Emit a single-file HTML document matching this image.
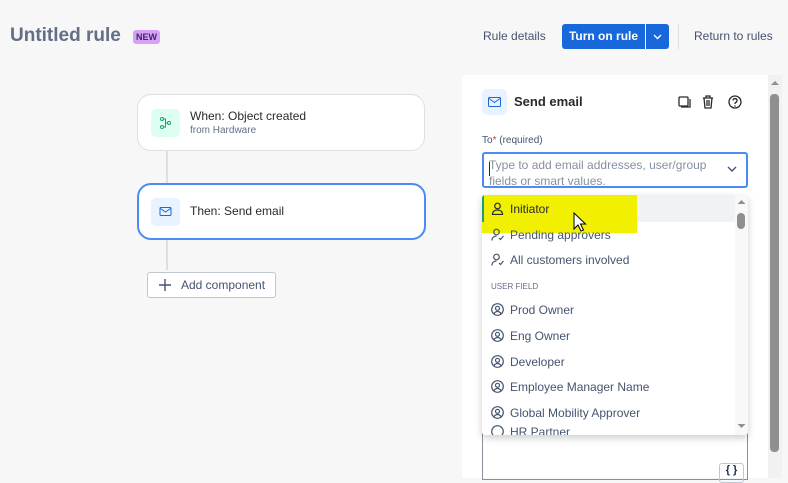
<!DOCTYPE html>
<html><head><style>
*{box-sizing:border-box;margin:0;padding:0}
body{width:788px;height:478px;overflow:hidden;background:#f7f7f7;font-family:"Liberation Sans",sans-serif;color:#172b4d;position:relative}
.a{position:absolute}
.row{position:absolute;left:482px;width:253px;height:25px;font-size:12px;color:#44546f;display:flex;align-items:center;padding-left:9px}
.row svg{margin-right:6px}
</style></head><body>
<div class="a" style="left:10px;top:25px;font-size:19px;font-weight:bold;color:#626f86">Untitled rule</div>
<div class="a" style="left:133px;top:30px;background:#d8a0f7;color:#352c63;font-size:9px;font-weight:bold;padding:2px 3px;border-radius:3px">NEW</div>
<div class="a" style="left:483px;top:29px;font-size:12px;color:#44546f">Rule details</div>
<div class="a" style="left:562px;top:24px;width:83px;height:25px;background:#1868db;border-radius:3px 0 0 3px;color:#fff;font-size:12px;font-weight:bold;line-height:25px;text-align:center">Turn on rule</div>
<div class="a" style="left:646px;top:24px;width:23px;height:25px;background:#1868db;border-radius:0 3px 3px 0"><svg width="23" height="25"><path d="M8 11l3.5 3.5L15 11" stroke="#fff" stroke-width="1.4" fill="none"/></svg></div>
<div class="a" style="left:678px;top:24px;width:1px;height:25px;background:#dcdfe4"></div>
<div class="a" style="left:694px;top:29px;font-size:12px;color:#44546f">Return to rules</div>

<div class="a" style="left:166px;top:150px;width:2px;height:120px;background:#dcdfe4"></div>
<div class="a" style="left:137px;top:94px;width:288px;height:57px;background:#fff;border:1px solid #dcdfe4;border-radius:14px"></div>
<div class="a" style="left:151px;top:109px;width:29px;height:28px;background:#dcfff1;border-radius:5px"><svg width="29" height="28"><g stroke="#22a06b" stroke-width="1" fill="none"><circle cx="11" cy="10" r="1.5"/><circle cx="11" cy="18" r="1.5"/><circle cx="18" cy="14" r="1.5"/><path d="M12.5 10h2v8h-2M14.5 14h2"/></g></svg></div>
<div class="a" style="left:190px;top:109px;font-size:12px;color:#292a2e">When: Object created</div>
<div class="a" style="left:190px;top:125px;font-size:10px;color:#626f86">from Hardware</div>
<div class="a" style="left:137px;top:183px;width:289px;height:57px;background:#fff;border:2px solid #4c8bf5;border-radius:14px"></div>
<div class="a" style="left:151px;top:198px;width:29px;height:28px;background:#e9f2ff;border-radius:5px"><svg width="29" height="28"><rect x="9" y="9.5" width="11" height="8" rx="1" stroke="#1868db" fill="none"/><path d="M9.5 10.5l5 3.5 5-3.5" stroke="#1868db" fill="none"/></svg></div>
<div class="a" style="left:190px;top:204px;font-size:12px;color:#292a2e">Then: Send email</div>
<div class="a" style="left:147px;top:272px;width:129px;height:26px;background:#fff;border:1px solid #c1c7d0;border-radius:3px;font-size:12px;color:#44546f;line-height:24px;padding-left:33px">Add component</div>
<svg class="a" style="left:158px;top:278px" width="14" height="14"><path d="M7 1v12M1 7h12" stroke="#44546f" stroke-width="1.4"/></svg>

<div class="a" style="left:462px;top:75px;width:306px;height:403px;background:#fff;border-radius:4px 0 0 0"></div>
<div class="a" style="left:768px;top:75px;width:14px;height:403px;background:#f1f1f1"></div>
<div class="a" style="left:770px;top:94px;width:9px;height:358px;background:#8f8f8f;border-radius:4px"></div>
<svg class="a" style="left:768px;top:78px" width="14" height="10"><path d="M3 7l4-4 4 4z" fill="#8f8f8f"/></svg>
<div class="a" style="left:482px;top:89px;width:25px;height:26px;background:#e9f2ff;border-radius:5px"><svg width="25" height="26"><rect x="6.5" y="8.5" width="12" height="9" rx="1" stroke="#1868db" fill="none"/><path d="M7 9.5l5.5 4 5.5-4" stroke="#1868db" fill="none"/></svg></div>
<div class="a" style="left:514px;top:94px;font-size:13px;font-weight:bold;color:#292a2e">Send email</div>
<svg class="a" style="left:677px;top:94px" width="70" height="16"><g stroke="#292a2e" stroke-width="1.3" fill="none"><rect x="2" y="3" width="9" height="9" rx="1"/><path d="M4 13h9V5"/><path d="M26 4h10M29 4V2h4v2M27 4l1 10h6l1-10M30 6v6M32 6v6"/><circle cx="58" cy="8" r="6"/><path d="M56 6.5a2 2 0 1 1 2.5 2c-.5.3-.5.7-.5 1.5"/></g><circle cx="58" cy="12" r=".8" fill="#292a2e"/></svg>
<div class="a" style="left:482px;top:135px;font-size:10px;color:#44546f">To<span style="color:#c9372c">*</span> (required)</div>
<div class="a" style="left:482px;top:152px;width:266px;height:36px;border:2px solid #4c8bf5;border-radius:3px;font-size:12px;color:#8590a2;padding:3px 0 0 5px;line-height:16px">Type to add email addresses, user/group<br>fields or smart values.</div>
<div class="a" style="left:489px;top:162px;width:1px;height:14px;background:#292a2e"></div>
<svg class="a" style="left:726px;top:164px" width="12" height="10"><path d="M2 3l4 4 4-4" stroke="#44546f" stroke-width="1.4" fill="none"/></svg>
<div class="a" style="left:482px;top:420px;width:266px;height:60px;border:1px solid #8c8f97;border-top:none"></div>
<div class="a" style="left:719px;top:463px;width:25px;height:20px;border:1px solid #c1c7d0;border-radius:3px;font-size:11px;text-align:center;font-weight:bold">{ }</div>

<div class="a" style="left:482px;top:195px;width:266px;height:240px;background:#fff;box-shadow:0 3px 8px rgba(0,0,0,.2);border-radius:3px;overflow:hidden">
<div class="a" style="left:0;top:0;width:253px;height:27px;background:#f1f2f4"></div>
<div class="a" style="left:0;top:0;width:155px;height:38px;background:#f0f000"></div>
<div class="a" style="left:0;top:0;width:2px;height:27px;background:#22a06b"></div>
<div class="row" style="left:0;top:230px;height:20px;align-items:flex-start"><svg width="13" height="13"><circle cx="6.5" cy="6.5" r="5.8" stroke="#44546f" stroke-width="1.2" fill="none"/></svg>HR Partner</div>
<div class="a" style="left:253px;top:0;width:13px;height:240px;background:#f8f8f8"></div>
<div class="a" style="left:255px;top:18px;width:8px;height:16px;background:#8f8f8f;border-radius:4px"></div>
<svg class="a" style="left:253px;top:2px" width="13" height="10"><path d="M2.5 7l4-4 4 4z" fill="#8f8f8f"/></svg>
<svg class="a" style="left:253px;top:226px" width="13" height="10"><path d="M2.5 3l4 4 4-4z" fill="#8f8f8f"/></svg>
</div>
<div class="row" style="top:196px;color:#292a2e"><svg width="13" height="13"><g stroke="#292a2e" stroke-width="1.2" fill="none"><circle cx="6.5" cy="4" r="2.8"/><path d="M1.5 12.5c0-3 2.2-4.5 5-4.5s5 1.5 5 4.5z"/></g></svg>Initiator</div>
<div class="row" style="top:222px"><svg width="13" height="13"><g stroke="#44546f" stroke-width="1.2" fill="none"><circle cx="5.5" cy="4" r="2.8"/><path d="M1 12.5c0-3 2-4.5 4.5-4.5M8 10l1.5 1.5L12.5 8"/></g></svg>Pending approvers</div>
<div class="row" style="top:247px"><svg width="13" height="13"><g stroke="#44546f" stroke-width="1.2" fill="none"><circle cx="5.5" cy="4" r="2.8"/><path d="M1 12.5c0-3 2-4.5 4.5-4.5M8 10l1.5 1.5L12.5 8"/></g></svg>All customers involved</div>
<div class="a" style="left:491px;top:282px;font-size:8px;color:#626f86">USER FIELD</div>
<div class="row" style="top:297px"><svg width="13" height="13"><g stroke="#44546f" stroke-width="1.2" fill="none"><circle cx="6.5" cy="6.5" r="5.8"/><circle cx="6.5" cy="5.3" r="2"/><path d="M3 10.5c1-1.5 2-2 3.5-2s2.5.5 3.5 2"/></g></svg>Prod Owner</div>
<div class="row" style="top:323px"><svg width="13" height="13"><g stroke="#44546f" stroke-width="1.2" fill="none"><circle cx="6.5" cy="6.5" r="5.8"/><circle cx="6.5" cy="5.3" r="2"/><path d="M3 10.5c1-1.5 2-2 3.5-2s2.5.5 3.5 2"/></g></svg>Eng Owner</div>
<div class="row" style="top:349px"><svg width="13" height="13"><g stroke="#44546f" stroke-width="1.2" fill="none"><circle cx="6.5" cy="6.5" r="5.8"/><circle cx="6.5" cy="5.3" r="2"/><path d="M3 10.5c1-1.5 2-2 3.5-2s2.5.5 3.5 2"/></g></svg>Developer</div>
<div class="row" style="top:374px"><svg width="13" height="13"><g stroke="#44546f" stroke-width="1.2" fill="none"><circle cx="6.5" cy="6.5" r="5.8"/><circle cx="6.5" cy="5.3" r="2"/><path d="M3 10.5c1-1.5 2-2 3.5-2s2.5.5 3.5 2"/></g></svg>Employee Manager Name</div>
<div class="row" style="top:400px"><svg width="13" height="13"><g stroke="#44546f" stroke-width="1.2" fill="none"><circle cx="6.5" cy="6.5" r="5.8"/><circle cx="6.5" cy="5.3" r="2"/><path d="M3 10.5c1-1.5 2-2 3.5-2s2.5.5 3.5 2"/></g></svg>Global Mobility Approver</div>
<svg class="a" style="left:572px;top:212px" width="16" height="22"><path d="M2 1v16l4-4 3 6 2.5-1-3-6h5z" fill="#fff" stroke="#000" stroke-width="1"/></svg>
</body></html>
